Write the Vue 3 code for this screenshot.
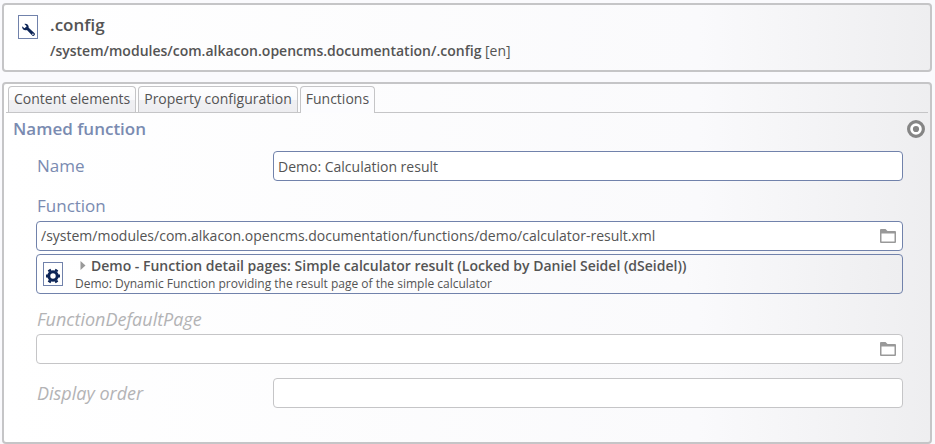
<script setup>
import { ref } from 'vue'

const tabs = ['Content elements', 'Property configuration', 'Functions']
const active = ref('Functions')
const name = ref('Demo: Calculation result')
const functionPath = ref('/system/modules/com.alkacon.opencms.documentation/functions/demo/calculator-result.xml')
const defaultPage = ref('')
const order = ref('')
</script>

<template>
  <div class="page">
    <header class="panel resource">
      <svg class="file-icon" viewBox="0 0 20 24" aria-hidden="true">
        <rect x="0.5" y="0.5" width="19" height="23" fill="#fff" stroke="#7182ab" />
        <path d="M6.4 8.9 C8.9 8.4 10.9 10.1 10.7 12.7 L16.6 18.3 C17.6 19.6 16.1 21.6 14.5 20.7 L8.9 15.1 C6.2 16 3.8 13.8 4.1 11.2 L6.5 13.3 L8.7 11.2 Z" fill="#0c2456" />
        <circle cx="14.9" cy="19.2" r="0.8" fill="#fff" />
      </svg>
      <div class="resource-text">
        <h1>.config</h1>
        <p><strong>/system/modules/com.alkacon.opencms.documentation/.config</strong> [en]</p>
      </div>
    </header>

    <main class="panel editor">
      <nav class="tabs" role="tablist">
        <button
          v-for="tab in tabs"
          :key="tab"
          type="button"
          role="tab"
          class="tab"
          :class="{ active: tab === active }"
          :aria-selected="tab === active"
          @click="active = tab"
        >{{ tab }}</button>
      </nav>

      <form class="form" @submit.prevent>
        <div class="heading">
          <h2>Named function</h2>
          <button type="button" class="icon-button" aria-label="Options">
            <svg width="18" height="18" viewBox="0 0 18 18" aria-hidden="true">
              <circle cx="9" cy="9" r="7.4" fill="#fff" stroke="#858585" stroke-width="3.2" />
              <circle cx="9" cy="9" r="3.1" fill="#858585" />
            </svg>
          </button>
        </div>

        <div class="fields">
          <div class="row">
            <label for="name">Name</label>
            <input id="name" v-model="name" class="box filled" type="text" />
          </div>

          <div class="stack">
            <label for="function">Function</label>
            <div class="box filled picker">
              <input id="function" v-model="functionPath" type="text" />
              <button type="button" class="icon-button" aria-label="Select function">
                <svg width="16" height="14" viewBox="0 0 16 14" aria-hidden="true">
                  <path d="M0 13 V1 Q0 0 1 0 H5.5 L7.5 2 H15 Q16 2 16 3 V13 Q16 14 15 14 H1 Q0 14 0 13 Z M1.5 4.5 V12.5 H14.5 V4.5 Z" fill="#999" fill-rule="evenodd" />
                </svg>
              </button>
            </div>
            <div class="box filled item">
              <svg class="file-icon" viewBox="0 0 20 24" aria-hidden="true">
                <rect x="0.5" y="0.5" width="19" height="23" fill="#fff" stroke="#7182ab" />
                <circle cx="10" cy="14" r="4.2" fill="none" stroke="#0c2456" stroke-width="3" />
                <path d="M7.2 9.4 L6 7.7 M12.8 9.4 L14 7.7 M5 14 H3 M15 14 H17 M7.2 18.6 L6 20.3 M12.8 18.6 L14 20.3" stroke="#0c2456" stroke-width="3.2" />
              </svg>
              <div class="item-text">
                <div class="item-title">
                  <button type="button" class="icon-button toggle" aria-label="Expand">
                    <svg width="6" height="9" viewBox="0 0 6 9" aria-hidden="true">
                      <path d="M0.5 0 L5.5 4.5 L0.5 9 Z" fill="#999" />
                    </svg>
                  </button>
                  <strong>Demo - Function detail pages: Simple calculator result (Locked by Daniel Seidel (dSeidel))</strong>
                </div>
                <p>Demo: Dynamic Function providing the result page of the simple calculator</p>
              </div>
            </div>
          </div>

          <div class="stack unused">
            <label for="default-page">FunctionDefaultPage</label>
            <div class="box picker">
              <input id="default-page" v-model="defaultPage" type="text" />
              <button type="button" class="icon-button" aria-label="Select default page">
                <svg width="16" height="14" viewBox="0 0 16 14" aria-hidden="true">
                  <path d="M0 13 V1 Q0 0 1 0 H5.5 L7.5 2 H15 Q16 2 16 3 V13 Q16 14 15 14 H1 Q0 14 0 13 Z M1.5 4.5 V12.5 H14.5 V4.5 Z" fill="#999" fill-rule="evenodd" />
                </svg>
              </button>
            </div>
          </div>

          <div class="row unused last">
            <label for="order">Display order</label>
            <input id="order" v-model="order" class="box" type="text" />
          </div>
        </div>
      </form>
    </main>
  </div>
</template>

<style>
body {
  background: #fafafd;
}
</style>

<style scoped>
.page,
.page * {
  box-sizing: border-box;
}

.page {
  display: flex;
  flex-direction: column;
  gap: 10px;
  padding: 3px 3px 0 2px;
  font-family: "Open Sans", sans-serif;
  font-size: 14px;
  line-height: 20px;
  color: #545454;
}

h1,
h2,
p {
  margin: 0;
}

strong,
h1,
h2 {
  font-weight: 600;
}

button,
input {
  font: inherit;
  color: inherit;
}

.panel {
  border: 2px solid #c5c5c7;
  border-radius: 4px;
  background: linear-gradient(to right, #fff 0%, #fafafc 75%, #eeeef0 100%);
}

.resource {
  display: flex;
  gap: 12px;
  padding: 10px 14px 9px;
}

.file-icon {
  flex: none;
  width: 20px;
  height: 24px;
}

.resource h1 {
  font-size: 17px;
  line-height: 20px;
}

.resource p {
  margin-top: 6px;
}

.editor {
  padding: 2px 2px 34px;
}

.tabs {
  display: flex;
  gap: 2px;
  padding-left: 2px;
  border-bottom: 1px solid #c5c5c7;
}

.tab {
  height: 26px;
  padding: 0 5px 2px;
  border: 1px solid #c5c5c7;
  border-bottom: 0;
  border-radius: 4px 4px 0 0;
  background: linear-gradient(#fff 0%, #fafafc 50%, #f0f0f3 51%, #ededf0 100%);
}

.tab.active {
  height: 27px;
  margin-bottom: -1px;
  padding-bottom: 3px;
  background: #fcfcfe;
}

.heading {
  display: flex;
  align-items: center;
  justify-content: space-between;
  height: 32px;
  margin-bottom: 6px;
  padding: 0 3px 0 7px;
}

.heading h2 {
  font-size: 17px;
  line-height: 24px;
  color: #7a8bb1;
}

.icon-button {
  display: flex;
  flex: none;
  padding: 0;
  border: 0;
  background: none;
}

.fields {
  display: flex;
  flex-direction: column;
  gap: 10px;
  padding: 0 25px 0 30px;
}

.row {
  display: grid;
  grid-template-columns: 237px 1fr;
}

.last {
  margin-top: 4px;
}

.stack {
  display: flex;
  flex-direction: column;
}

label {
  padding-left: 1px;
  font-size: 17px;
  line-height: 30px;
  color: #7a8bb1;
}

.unused label {
  font-size: 18px;
  font-style: italic;
  color: #b3b3b5;
}

.box {
  width: 100%;
  min-width: 0;
  height: 30px;
  padding: 0 4px;
  border: 1px solid #c5c5c7;
  border-radius: 4px;
  background: #fff;
}

.filled {
  border-color: #7182ab;
}

.picker {
  display: flex;
  align-items: center;
  padding-right: 6px;
}

.picker input {
  flex: 1;
  min-width: 0;
  padding: 0;
  border: 0;
  background: none;
  outline: none;
}

.item {
  display: flex;
  align-items: center;
  gap: 12px;
  height: auto;
  margin-top: 3px;
  padding: 1px 6px;
  background: linear-gradient(to right, #fff 0%, #fafafc 75%, #eeeef0 100%);
}

.item-title {
  display: flex;
  align-items: center;
  gap: 5px;
  padding-left: 5px;
}

.toggle {
  padding-bottom: 2px;
}

.item p {
  font-size: 12px;
  line-height: 16px;
}
</style>
